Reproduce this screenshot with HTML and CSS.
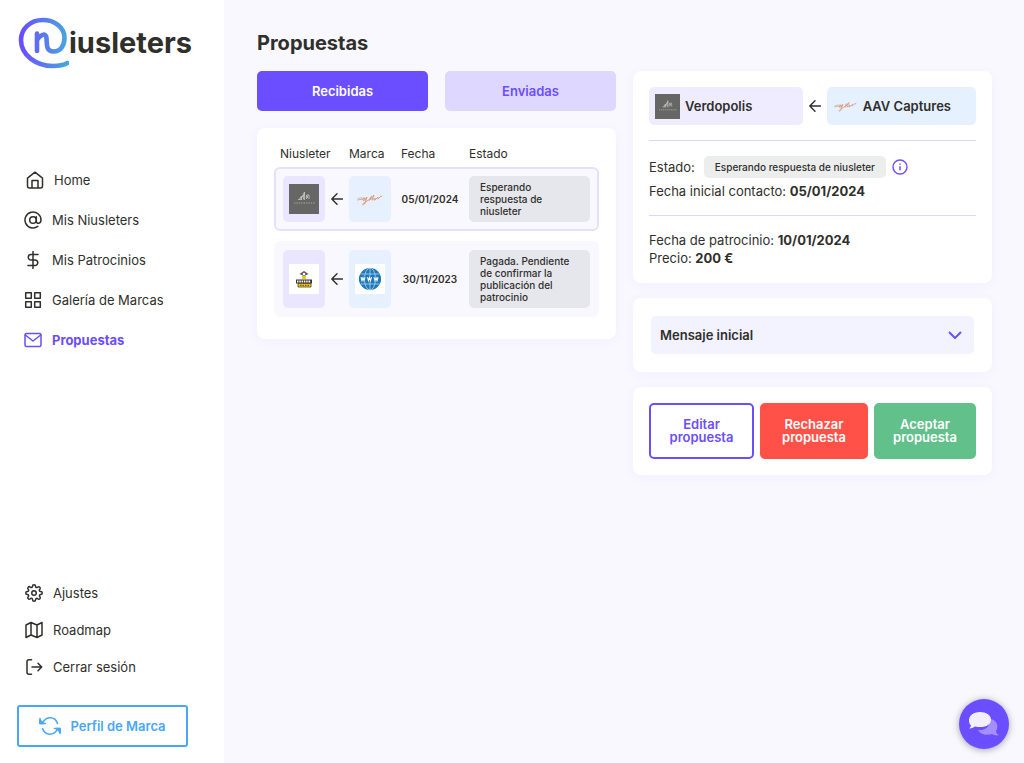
FILE: index.html
```
<!DOCTYPE html>
<html lang="es">
<head>
<meta charset="utf-8">
<meta name="viewport" content="width=device-width, initial-scale=1">
<title>Propuestas - Niusleters</title>
<link rel="stylesheet" href="styles.css">
</head>
<body>
<svg class="defs" width="0" height="0" aria-hidden="true">
  <defs>
    <symbol id="arrow" viewBox="0 0 12 12"><path d="M11.5 6H1M6 .8 .8 6 6 11.2" fill="none" stroke="#2f2f2b" stroke-width="1.4" stroke-linecap="round" stroke-linejoin="round"/></symbol>
    <symbol id="verdopolis" viewBox="0 0 30 30"><rect width="30" height="30" fill="#666764"/><path d="M9 15.500h4M10.500 15l2-3M12.500 15.500v-3l2-1v4M14 11l1.500-3v8M15.500 10l-4 5M17.500 15v-4h2.500v4M18.500 12v2" fill="none" stroke="#d4d4d0" stroke-width=".7"/><path d="M5 19h21" stroke="#a5a5a1" stroke-width="1.200" stroke-dasharray="1.400 1"/></symbol>
    <symbol id="captures" viewBox="0 0 28 16"><path d="M1 8c4-2 8-1 9 0" fill="none" stroke="#c9c5c5" stroke-width="1"/><path d="M2 9c3-1 5-1 7-1M9 7c-3 0-3 4 0 2l2-3-2 6c-1 3-4 2-1 0l6-4c1-4 3-3 1-1s-2 3-1 2l4-5-2 5c2 0 2-2 3-2s-2 3 0 2l3-3c0 2-1 3 1 1l2-2c0 1 0 1 1 0" fill="none" stroke="#dc9576" stroke-width=".9" stroke-linecap="round"/></symbol>
  </defs>
</svg>
<div class="app">
  <aside class="sidebar">
    <a class="logo" href="#" aria-label="Niusleters">
      <svg width="52" height="54" viewBox="0 0 52 54" aria-hidden="true">
        <defs><linearGradient id="brand"><stop offset="0" stop-color="#6b4eff"/><stop offset="1" stop-color="#48a7dc"/></linearGradient></defs>
        <path d="M20 17.500V35M20 24c3-5 9-8 9.500-2 .5 7-.5 13 7 13.500C44 35.500 47.500 29 47.500 22 47.500 11 37 4 26 4 13 4 4 13 4 24c0 15 15 26 32 26 6 0 11-1 14.500-3" fill="none" stroke="url(#brand)" stroke-width="4.600" stroke-linecap="round" stroke-linejoin="round"/>
      </svg>
      <span class="logo-text">iusleters</span>
    </a>
    <nav class="nav">
      <a class="nav-item inset" href="#"><svg class="icon" viewBox="0 0 18 18"><path d="M1.500 7.200 9 1.200l7.500 6V15q0 2-2 2h-11q-2 0-2-2zM6 17V9.500h6V17"/></svg>Home</a>
      <a class="nav-item" href="#"><svg class="icon" viewBox="0 0 18 18"><circle cx="9" cy="9" r="3.300"/><path d="M12.300 5.700v4.500c0 3 4.700 2.800 4.700-1.200a8 8 0 1 0-3.200 6.400"/></svg>Mis Niusleters</a>
      <a class="nav-item" href="#"><svg class="icon" viewBox="0 0 18 18"><path d="M9 .5v17M14 3.500H7a2.750 2.750 0 0 0 0 5.500h4a2.750 2.750 0 0 1 0 5.500H4"/></svg>Mis Patrocinios</a>
      <a class="nav-item" href="#"><svg class="icon" viewBox="0 0 18 18"><path d="M1.700 1.700h5.600v5.600H1.700zM10.700 1.700h5.600v5.600h-5.600zM1.700 10.700h5.600v5.600H1.700zM10.700 10.700h5.600v5.600h-5.600z"/></svg>Galería de Marcas</a>
      <a class="nav-item active" href="#" aria-current="page"><svg class="icon" viewBox="0 0 18 18"><rect x="1" y="2.500" width="16" height="13" rx="1.500"/><path d="m1.300 4 7.700 6 7.700-6"/></svg>Propuestas</a>
    </nav>
    <nav class="nav nav-bottom">
      <a class="nav-item" href="#"><svg class="icon" viewBox="0 0 24 24"><g stroke-width="2"><circle cx="12" cy="12" r="3"/><path d="M19.400 15a1.650 1.650 0 0 0 .33 1.820l.06.060a2 2 0 1 1-2.830 2.830l-.06-.06a1.650 1.650 0 0 0-2.800 1.170V21a2 2 0 0 1-4 0v-.09a1.650 1.650 0 0 0-2.900-1.260l-.06.060a2 2 0 1 1-2.830-2.830l.06-.06A1.650 1.650 0 0 0 3.200 14H3a2 2 0 0 1 0-4h.09a1.650 1.650 0 0 0 1.260-2.900l-.06-.06a2 2 0 1 1 2.830-2.830l.06.060A1.650 1.650 0 0 0 10 3.200V3a2 2 0 0 1 4 0v.09a1.650 1.650 0 0 0 2.820 1.180l.06-.06a2 2 0 1 1 2.830 2.830l-.06.060A1.650 1.650 0 0 0 20.800 10H21a2 2 0 0 1 0 4h-.09a1.650 1.650 0 0 0-1.510 1z"/></g></svg>Ajustes</a>
      <a class="nav-item" href="#"><svg class="icon" viewBox="0 0 18 18"><path d="m1 4 5-2.500 6 2.500 5-2.500V14l-5 2.500L6 14l-5 2.500zM6 1.500V14M12 4v12.500"/></svg>Roadmap</a>
      <a class="nav-item" href="#"><svg class="icon" viewBox="0 0 18 18"><path d="M6.500 1.700H4q-2 0-2 2v10.600q0 2 2 2h2.500M7 9h9.500M13 5.300 16.700 9 13 12.700"/></svg>Cerrar sesión</a>
    </nav>
    <button class="profile" type="button">
      <svg width="22" height="20" viewBox="0 0 22 20" fill="none" stroke="currentColor" stroke-width="1.600" stroke-linecap="round" stroke-linejoin="round" aria-hidden="true"><path d="M3.500 7C7 0 16 0 18.500 7.500M1 2.500v5h5.500M18.500 13C15 20 6 20 3.500 12.500M15.500 12.500H21v5"/><path d="M1 4v3.500h3.500zM17.500 12.500H21V16z" fill="currentColor"/></svg>
      Perfil de Marca
    </button>
  </aside>

  <main class="main">
    <h1 class="title">Propuestas</h1>
    <div class="columns">
      <section class="list">
        <div class="tabs" role="tablist">
          <button class="tab selected" type="button" role="tab" aria-selected="true">Recibidas</button>
          <button class="tab" type="button" role="tab" aria-selected="false">Enviadas</button>
        </div>
        <div class="card table-card">
          <table class="proposals">
            <thead>
              <tr class="row head"><th class="wide">Niusleter</th><th>Marca</th><th>Fecha</th><th>Estado</th></tr>
            </thead>
            <tbody>
              <tr class="row item current">
                <td class="tile violet"><svg width="30" height="30" role="img" aria-label="Verdopolis"><use href="#verdopolis"/></svg></td>
                <td class="arrow-cell"><svg width="12" height="12"><use href="#arrow"/></svg></td>
                <td class="tile blue"><svg width="28" height="16" role="img" aria-label="AAV Captures"><use href="#captures"/></svg></td>
                <td class="date">05/01/2024</td>
                <td class="status">Esperando respuesta de niusleter</td>
              </tr>
              <tr class="row item">
                <td class="tile violet"><svg width="30" height="30" viewBox="0 0 30 30" aria-hidden="true"><path fill="#fff" d="M0 0h30v30H0z"/><path d="M10.500 10 15 7l4.500 3-4.500 2z" fill="#555"/><circle cx="15" cy="10" r="1.300" fill="#fff"/><path d="M13 12h4v3h-4z" fill="#f3c51f"/><path d="M7 15.500h16v4H7z" fill="#333"/><path d="M8 17.500h14" stroke="#fff" stroke-width="2" stroke-dasharray="1.500 .8"/><path d="M9 19.500h13v3.500H9z" fill="#f3c51f" stroke="#4a421d" stroke-width=".8"/><path d="M11 21.300h9" stroke="#5a4b15" stroke-dasharray="1.500 1"/></svg></td>
                <td class="arrow-cell"><svg width="12" height="12"><use href="#arrow"/></svg></td>
                <td class="tile blue"><svg width="30" height="30" viewBox="0 0 30 30" aria-hidden="true"><path fill="#fff" d="M0 0h30v30H0z"/><circle cx="15" cy="15" r="11" fill="#1c79ba"/><g fill="none" stroke="#b5d6eb" stroke-width=".8"><ellipse cx="15" cy="15" rx="5.500" ry="11"/><path d="M15 4v22M5.500 10h19M5.500 20h19"/></g><path d="M4 12.500h22v5H4z" fill="#1c79ba"/><path d="m6 13.200 1 3.500 1-3 1 3 1-3.500m2.500 0 1 3.500 1-3 1 3 1-3.500m2.500 0 1 3.500 1-3 1 3 1-3.500" fill="none" stroke="#fff" stroke-width="1.100"/></svg></td>
                <td class="date">30/11/2023</td>
                <td class="status">Pagada. Pendiente de confirmar la publicación del patrocinio</td>
              </tr>
            </tbody>
          </table>
        </div>
      </section>

      <section class="detail">
        <div class="card">
          <div class="parties">
            <div class="party party-violet"><svg width="25" height="25" viewBox="0 0 30 30" aria-hidden="true"><use href="#verdopolis" width="30" height="30"/></svg>Verdopolis</div>
            <svg width="12" height="12" aria-hidden="true"><use href="#arrow"/></svg>
            <div class="party party-blue"><svg width="25" height="14" viewBox="0 0 28 16" aria-hidden="true"><use href="#captures" width="28" height="16"/></svg>AAV Captures</div>
          </div>
          <div class="facts">
            <div class="state">Estado: <span class="pill">Esperando respuesta de niusleter</span>
              <button class="info" type="button" aria-label="Información"><svg width="16" height="16" viewBox="0 0 16 16" fill="none" stroke="#6b4eff"><circle cx="8" cy="8" r="7" stroke-width="1.400"/><path d="M8 7.300v3.900M8 4.400v1.400" stroke-width="1.500"/></svg></button>
            </div>
            <p class="fact">Fecha inicial contacto: <strong>05/01/2024</strong></p>
          </div>
          <div class="facts sponsor">
            <p class="fact">Fecha de patrocinio: <strong>10/01/2024</strong></p>
            <p class="fact">Precio: <strong>200 €</strong></p>
          </div>
        </div>
        <div class="card message-card">
          <button class="message" type="button" aria-expanded="false">Mensaje inicial<svg width="14" height="8" viewBox="0 0 14 8" fill="none" stroke="#6b4eff" stroke-width="2" aria-hidden="true"><path d="m1 1 6 6 6-6"/></svg></button>
        </div>
        <div class="card actions">
          <button class="action edit" type="button">Editar propuesta</button>
          <button class="action reject" type="button">Rechazar propuesta</button>
          <button class="action accept" type="button">Aceptar propuesta</button>
        </div>
      </section>
    </div>
  </main>
  <button class="chat" type="button" aria-label="Chat">
    <svg width="32" height="26" viewBox="0 0 32 26" aria-hidden="true"><path d="M20 8c7-1 12 6 8 12 0 2 1 3 3 4-3 1-5 0-7-1-6 2-12 0-14-4 7 1 14-4 10-11z" fill="#a48fff"/><path d="M12 1C5 1 1 5 1 9.500c0 3 1 4 2 5 0 1-1 2-2 3 3 0 4-1 6-2 9 2 16-1 16-7C23 4 18 1 12 1z" fill="#f3efff"/></svg>
  </button>
</div>
</body>
</html>
```
FILE: styles.css
```
* { box-sizing: border-box; }

body {
  margin: 0;
  background: #f9f8ff;
  color: #2f2f2b;
  font: 13px/18px Inter, "Liberation Sans", sans-serif;
}

button { font: inherit; color: inherit; border: 0; cursor: pointer; }
a { color: inherit; text-decoration: none; }
svg { flex: none; display: block; }
.defs { position: absolute; }

.app { display: flex; min-height: 100vh; }

.sidebar {
  display: flex;
  flex-direction: column;
  flex: none;
  width: 224px;
  padding: 16px 17px;
  background: #fff;
}
.logo { display: flex; align-items: center; height: 54px; }
.logo-text { font-size: 29px; font-weight: 700; }

.nav { display: flex; flex-direction: column; margin-top: 90px; }
.nav-item {
  display: flex;
  align-items: center;
  gap: 10px;
  height: 40px;
  padding-left: 7px;
}
.inset { padding-left: 9px; }
.icon {
  width: 18px;
  height: 18px;
  fill: none;
  stroke: currentColor;
  stroke-width: 1.5px;
  stroke-linecap: round;
  stroke-linejoin: round;
}
.active { color: #6b4eff; font-weight: 700; }
.nav-bottom { margin-top: auto; }
.nav-bottom .nav-item { height: 37px; padding-left: 8px; }

.profile {
  display: flex;
  align-items: center;
  justify-content: center;
  gap: 9px;
  width: 171px;
  height: 42px;
  margin-top: 20px;
  border: 2px solid #48a7f8;
  border-radius: 3px;
  background: #fff;
  color: #48a7f8;
  font-weight: 600;
}

.main { flex: 1; min-width: 0; padding: 30px 32px 32px 33px; }
.title { margin: 0 0 15px; font-size: 20px; line-height: 26px; font-weight: 700; }
.columns { display: grid; grid-template-columns: 1fr 1fr; gap: 17px; align-items: start; }

.tabs { display: grid; grid-template-columns: 1fr 1fr; gap: 17px; margin-bottom: 17px; }
.tab {
  height: 40px;
  border-radius: 5px;
  background: #ded7ff;
  color: #6b4eff;
  font-weight: 600;
}
.tab.selected { background: #6b4eff; color: #fff; }

.card {
  padding: 16px;
  border-radius: 8px;
  background: #fff;
  box-shadow: 0 2px 12px rgba(107, 78, 255, 0.05);
}
.table-card { padding: 17px 17px 22px; }

.proposals, .proposals thead, .proposals tbody { display: block; }
.row {
  display: grid;
  grid-template-columns: 42px 24px 42px 78px 1fr;
}
.head { padding: 0 6px 4px; }
.head th { padding: 0; font-size: 12px; font-weight: 400; text-align: left; }
.head .wide { grid-column: span 2; }
.head th:nth-child(2) { padding-left: 3px; }
.head th:nth-child(3) { padding-left: 13px; }
.head th:nth-child(4) { padding-left: 3px; }
.item {
  padding: 7px;
  border: 2px solid #f9f8ff;
  border-radius: 6px;
  background: #f9f8ff;
}
.item + .item { margin-top: 10px; }
.item.current { border-color: #e6e0ff; }
.item td { padding: 0; }
.tile { display: grid; place-items: center; border-radius: 5px; }
.violet { background: #ebe6ff; }
.blue { background: #e7f0ff; }
.arrow-cell { display: grid; place-items: center; }
.date { align-self: center; text-align: center; font-size: 10px; font-weight: 600; }
.item .status {
  padding: 5px 11px;
  border-radius: 5px;
  background: #e6e7ec;
  font-size: 10px;
  line-height: 12px;
  font-weight: 500;
}

.detail { display: grid; gap: 15px; }
.parties { display: flex; align-items: center; gap: 6px; padding-bottom: 15px; }
.party {
  display: flex;
  align-items: center;
  gap: 5px;
  flex: 1 0 auto;
  height: 38px;
  padding: 0 6px;
  border-radius: 5px;
  font-weight: 600;
}
.party-violet { flex: 0 0 47%; background: #f0ecff; }
.party-blue { background: #e6f1ff; }

.facts { border-top: 1px solid #dcd5ff; padding: 15px 0; }
.fact { margin: 0; }
.fact strong { font-weight: 700; }
.state { display: flex; align-items: center; margin-bottom: 4px; }
.pill {
  margin: 0 6px 0 9px;
  padding: 2px 11px;
  border-radius: 5px;
  background: #eceeee;
  font-size: 10px;
  font-weight: 500;
}
.info { padding: 0; background: none; }
.sponsor { padding-bottom: 0; }

.message-card { padding: 18px; }
.message {
  display: flex;
  align-items: center;
  justify-content: space-between;
  width: 100%;
  height: 38px;
  padding: 0 12px 0 9px;
  border-radius: 5px;
  background: #f3f2ff;
  font-weight: 600;
}

.actions { display: grid; grid-template-columns: 105px 108px 1fr; gap: 6px; }
.action {
  padding: 13px 8px;
  border: 2px solid transparent;
  border-radius: 5px;
  color: #fff;
  font-weight: 600;
  line-height: 13px;
}
.edit { border-color: #6b4eff; background: #fff; color: #6b4eff; }
.reject { border-color: #ff5147; background: #ff5147; }
.accept { border-color: #62c08a; background: #62c08a; }

.chat {
  position: fixed;
  right: 15px;
  bottom: 14px;
  display: grid;
  place-items: center;
  width: 50px;
  height: 50px;
  padding: 0;
  border-radius: 50%;
  background: #6b4eff;
  box-shadow: 0 1px 7px rgba(0, 0, 0, 0.35);
}
```
